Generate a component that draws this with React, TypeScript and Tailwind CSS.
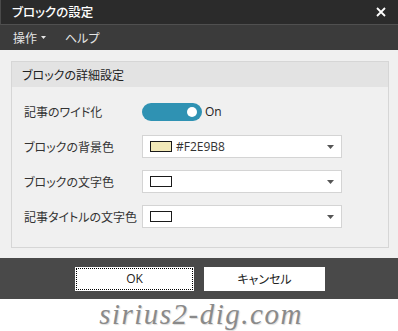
import React from "react";

const jp = "font-['Noto_Sans_CJK_JP','Noto_Sans',sans-serif] [font-feature-settings:'palt']";

function Arrow() {
  return (
    <svg width="7" height="4" viewBox="0 0 7 4" className="shrink-0">
      <path d="M0 0 L7 0 L3.5 4 Z" fill="#555" />
    </svg>
  );
}

function ColorSelect({ color, label }: { color: string; label?: string }) {
  return (
    <div className="w-[200px] h-[23px] bg-white border border-[#d4d4d4] flex items-center pl-[7px] pr-[7px]">
      <div className="w-[22px] h-[11px] border border-[#1a1a1a]" style={{ backgroundColor: color }} />
      <span className="ml-[4px] text-[12px] text-[#333] font-['Open_Sans','Liberation_Sans',sans-serif]">{label}</span>
      <div className="flex-1" />
      <Arrow />
    </div>
  );
}

function Row({ label, children }: { label: string; children: React.ReactNode }) {
  return (
    <div className="h-[23px] flex items-center">
      <div className={`w-[118px] text-[12px] text-[#333] ${jp}`}>{label}</div>
      {children}
    </div>
  );
}

export default function App() {
  return (
    <div className="w-[398px] h-[331px] flex flex-col bg-white overflow-hidden">
      <div className="h-[25px] bg-[#2b2b2b] border-b border-[#505050] border-l border-l-[#4a4a4a] flex items-center pl-[11px] pr-[12px]">
        <span className={`text-[12.5px] text-white font-medium ${jp}`}>ブロックの設定</span>
        <div className="flex-1" />
        <svg width="10" height="10" viewBox="0 0 10 10">
          <path d="M1 1 L9 9 M9 1 L1 9" stroke="#fff" strokeWidth="1.8" />
        </svg>
      </div>
      <div className="h-[25px] bg-[#3b3b3b] flex items-center pl-[13px] gap-[19px]">
        <div className="flex items-center gap-[4px]">
          <span className={`text-[12px] text-[#e6e6e6] ${jp}`}>操作</span>
          <svg width="5" height="3" viewBox="0 0 5 3">
            <path d="M0 0 L5 0 L2.5 3 Z" fill="#e6e6e6" />
          </svg>
        </div>
        <span className={`text-[12px] text-[#e6e6e6] ${jp}`}>ヘルプ</span>
      </div>
      <div className="h-[208px] bg-[#f0f0f0] pt-[11px] pl-[11px] pr-[9px] pb-[10px]">
        <div className="h-full border border-[#d6d6d6] flex flex-col">
          <div className="h-[25px] bg-[#e3e3e3] flex items-center pl-[10px]">
            <span className={`text-[12px] text-[#222] ${jp}`}>ブロックの詳細設定</span>
          </div>
          <div className="flex flex-col pl-[12px] pt-[13px] gap-[12px]">
            <Row label="記事のワイド化">
              <div className="flex items-center">
                <div className="w-[60px] h-[18px] rounded-full bg-[#2f92b3] flex items-center justify-end pr-[5px]">
                  <div className="w-[10px] h-[10px] rounded-full bg-white" />
                </div>
                <span className="ml-[3px] text-[12px] text-[#222] font-['Open_Sans','Liberation_Sans',sans-serif]">On</span>
              </div>
            </Row>
            <Row label="ブロックの背景色">
              <ColorSelect color="#F2E9B8" label="#F2E9B8" />
            </Row>
            <Row label="ブロックの文字色">
              <ColorSelect color="#ffffff" />
            </Row>
            <Row label="記事タイトルの文字色">
              <ColorSelect color="#ffffff" />
            </Row>
          </div>
        </div>
      </div>
      <div className="h-[41px] bg-[#494949] flex items-center justify-center gap-[10px] pl-[2px]">
        <button className="w-[119px] h-[24px] bg-white p-[1px]">
          <div className="w-full h-full border border-dotted border-black flex items-center justify-center text-[12px] text-[#222] font-['Open_Sans','Liberation_Sans',sans-serif]">OK</div>
        </button>
        <button className={`w-[121px] h-[24px] bg-white flex items-center justify-center text-[12px] text-[#222] ${jp}`}>キャンセル</button>
      </div>
      <div className="flex-1 bg-white flex items-start justify-center pl-[4px] pt-[1px]">
        <span className="[font-family:'Liberation_Serif',serif] [font-style:italic] [font-weight:400] text-[29px] leading-[29px] tracking-[1.5px] text-[#8a8a8a] [text-shadow:1px_1px_1px_#dcdcdc]">sirius2-dig.com</span>
      </div>
    </div>
  );
}
